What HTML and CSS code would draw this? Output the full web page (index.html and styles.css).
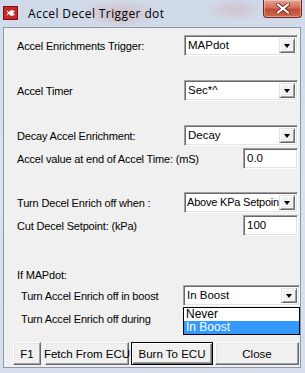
FILE: index.html
```html
<!DOCTYPE html>
<html>
<head>
<meta charset="utf-8">
<link rel="stylesheet" href="styles.css">
</head>
<body>
<div class="window">
  <div class="titlebar">
    <svg class="app-icon" width="15" height="14" viewBox="0 0 15 14">
      <rect x="0" y="0" width="15" height="14" fill="#c8282a"/>
      <rect x="0.5" y="0.5" width="14" height="13" fill="none" stroke="#7a1010"/>
      <path d="M3 4 L6 6 L8 4 L12 5 L10 7 L12 9 L8 10 L6 8 L3 10 L5 7 Z" fill="#fff"/>
    </svg>
    <span class="title">Accel Decel Trigger dot</span>
    <div class="close-btn">
      <svg width="14" height="11" viewBox="0 0 14 11">
        <path d="M2 1.5 L12 9.5 M12 1.5 L2 9.5" stroke="#5a1a10" stroke-width="3.6" stroke-linecap="square"/>
        <path d="M2 1.5 L12 9.5 M12 1.5 L2 9.5" stroke="#fff" stroke-width="2.2" stroke-linecap="square"/>
      </svg>
    </div>
  </div>
  <div class="client">
    <div class="row r1">
      <span class="label">Accel Enrichments Trigger:</span>
      <div class="combo"><span class="val">MAPdot</span><span class="arrow"><i></i></span></div>
    </div>
    <div class="row r2">
      <span class="label">Accel Timer</span>
      <div class="combo"><span class="val">Sec*^</span><span class="arrow"><i></i></span></div>
    </div>
    <div class="row r3">
      <span class="label">Decay Accel Enrichment:</span>
      <div class="combo"><span class="val">Decay</span><span class="arrow"><i></i></span></div>
    </div>
    <div class="row r4">
      <span class="label">Accel value at end of Accel Time: (mS)</span>
      <div class="field">0.0</div>
    </div>
    <div class="row r5">
      <span class="label">Turn Decel Enrich off when :</span>
      <div class="combo"><span class="val tight">Above KPa Setpoin</span><span class="arrow"><i></i></span></div>
    </div>
    <div class="row r6">
      <span class="label">Cut Decel Setpoint: (kPa)</span>
      <div class="field">100</div>
    </div>
    <div class="section-label">If MAPdot:</div>
    <div class="row r7">
      <span class="label indent">Turn Accel Enrich off in boost</span>
      <div class="combo-wrap">
        <div class="combo wide"><span class="val">In Boost</span><span class="arrow"><i></i></span></div>
        <ul class="droplist">
          <li>Never</li>
          <li class="sel">In Boost</li>
        </ul>
      </div>
    </div>
    <div class="row r8">
      <span class="label indent">Turn Accel Enrich off during</span>
    </div>
    <div class="buttons">
      <div class="btn b-f1">F1</div>
      <div class="btn b-fetch">Fetch From ECU</div>
      <div class="btn b-burn">Burn To ECU</div>
      <div class="btn b-close">Close</div>
    </div>
  </div>
</div>
</body>
</html>
```

FILE: styles.css
```css
html, body {
  margin: 0;
  padding: 0;
}
body {
  width: 305px;
  height: 373px;
  overflow: hidden;
  font-family: "Liberation Sans", Arial, sans-serif;
  font-size: 11px;
  color: #000;
}
.window {
  width: 305px;
  height: 373px;
  box-sizing: border-box;
  display: flex;
  flex-direction: column;
  background:
    radial-gradient(ellipse 40px 14px at 120px 14px, rgba(220,120,120,0.30), rgba(220,120,120,0) 100%),
    radial-gradient(ellipse 30px 12px at 235px 10px, rgba(220,130,130,0.25), rgba(220,130,130,0) 100%),
    linear-gradient(180deg, #cfd9e8 0%, #d9e2ee 40%, #d6dfeb 100%);
}
.titlebar {
  height: 27px;
  display: flex;
  align-items: flex-start;
  flex: none;
}
.app-icon {
  margin: 6px 0 0 3px;
  flex: none;
}
.title {
  font-family: "Open Sans", "Noto Sans", sans-serif;
  font-size: 12px;
  letter-spacing: 0.4px;
  margin: 5px 0 0 10px;
  color: #000;
}
.close-btn {
  margin-left: auto;
  margin-right: 3px;
  width: 39px;
  height: 18px;
  box-sizing: border-box;
  border: 1px solid #6b2b24;
  border-top: none;
  border-radius: 0 0 4px 4px;
  background: linear-gradient(180deg, #e8a293 0%, #d3705c 45%, #c24a32 55%, #cf6a4e 100%);
  display: flex;
  align-items: center;
  justify-content: center;
  box-shadow: inset 0 0 0 1px rgba(255,255,255,0.35);
}
.client {
  flex: 1;
  margin: 0 4px 5px 3px;
  border: 1px solid #8d99a6;
  background: #f0f0f0;
  position: relative;
  display: flex;
  flex-direction: column;
  padding: 0 0 0 13px;
}
.row {
  display: flex;
  align-items: center;
  height: 21px;
  position: relative;
}
.label {
  flex: 1;
  white-space: nowrap;
  letter-spacing: -0.17px;
}
.label.indent {
  padding-left: 4px;
}
.r1 { margin-top: 7px; }
.r2 { margin-top: 24px; }
.r3 { margin-top: 24px; }
.r4 { margin-top: 2px; }
.r5 { margin-top: 23px; }
.r6 { margin-top: 2px; }
.section-label {
  margin-top: 32px;
  height: 14px;
  line-height: 14px;
  letter-spacing: -0.17px;
}
.r7 { margin-top: 3px; }
.r8 { margin-top: 2px; }
.combo, .field {
  box-sizing: border-box;
  height: 21px;
  background: #fff;
  border: 1px solid;
  border-color: #a0a0a0 #fff #fff #a0a0a0;
  box-shadow: inset 1px 1px 0 #696969, inset -1px -1px 0 #e3e3e3;
}
.combo {
  width: 114px;
  margin-right: 2px;
  display: flex;
  align-items: center;
  padding: 2px 2px 2px 3px;
}
.combo.wide {
  width: 117px;
  margin-right: 0;
}
.combo-wrap {
  position: relative;
}
.val {
  flex: 1;
  overflow: hidden;
  white-space: nowrap;
  font-size: 11.5px;
  line-height: 15px;
}
.val.tight {
  font-size: 11px;
  letter-spacing: -0.2px;
  margin-left: -1px;
}
.arrow {
  width: 16px;
  height: 15px;
  box-sizing: border-box;
  background: #f0f0f0;
  border: 1px solid;
  border-color: #e3e3e3 #696969 #696969 #e3e3e3;
  box-shadow: inset 1px 1px 0 #fff, inset -1px -1px 0 #a0a0a0;
  display: flex;
  align-items: center;
  justify-content: center;
  flex: none;
}
.arrow i {
  width: 0;
  height: 0;
  border-left: 3.5px solid transparent;
  border-right: 3.5px solid transparent;
  border-top: 4px solid #000;
}
.field {
  width: 55px;
  margin-right: 2px;
  padding: 2px 3px;
  font-size: 11.5px;
  line-height: 15px;
}
.droplist {
  position: absolute;
  left: 0;
  top: 22px;
  width: 117px;
  box-sizing: border-box;
  margin: 0;
  padding: 0;
  list-style: none;
  border: 1px solid #000;
  background: #fff;
  z-index: 2;
}
.droplist li {
  height: 13px;
  line-height: 13px;
  padding-left: 2px;
  font-size: 12px;
}
.droplist li.sel {
  background: #3399ff;
  color: #fff;
}
.buttons {
  display: flex;
  margin-top: 13px;
  margin-left: -4px;
  height: 23px;
}
.btn {
  box-sizing: border-box;
  height: 23px;
  display: flex;
  align-items: center;
  justify-content: center;
  font-size: 11.5px;
  white-space: nowrap;
  background: #f0f0f0;
  border: 1px solid;
  border-color: #fff #696969 #696969 #fff;
  box-shadow: inset -1px -1px 0 #a0a0a0, inset 1px 1px 0 #e3e3e3;
}
.b-f1 { width: 28px; }
.b-fetch { width: 84px; margin-left: 4px; }
.b-burn {
  width: 82px;
  margin-left: 2px;
  border: 1px solid #000;
  box-shadow: inset 1px 1px 0 #fff, inset -1px -1px 0 #696969, inset -2px -2px 0 #a0a0a0;
}
.b-close { width: 84px; margin-left: 2px; }
```
